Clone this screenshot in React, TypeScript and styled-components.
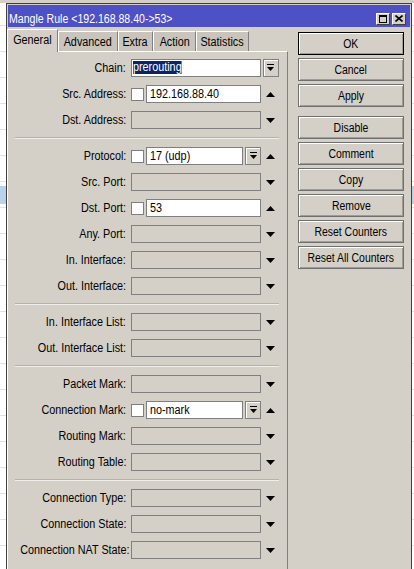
import styled, { createGlobalStyle } from 'styled-components';

type FieldKind = 'chain' | 'text' | 'combo' | 'empty';

interface FieldDef {
  label: string;
  kind: FieldKind;
  value?: string;
}

const sections: FieldDef[][] = [
  [
    { label: 'Chain:', kind: 'chain', value: 'prerouting' },
    { label: 'Src. Address:', kind: 'text', value: '192.168.88.40' },
    { label: 'Dst. Address:', kind: 'empty' },
  ],
  [
    { label: 'Protocol:', kind: 'combo', value: '17 (udp)' },
    { label: 'Src. Port:', kind: 'empty' },
    { label: 'Dst. Port:', kind: 'text', value: '53' },
    { label: 'Any. Port:', kind: 'empty' },
    { label: 'In. Interface:', kind: 'empty' },
    { label: 'Out. Interface:', kind: 'empty' },
  ],
  [
    { label: 'In. Interface List:', kind: 'empty' },
    { label: 'Out. Interface List:', kind: 'empty' },
  ],
  [
    { label: 'Packet Mark:', kind: 'empty' },
    { label: 'Connection Mark:', kind: 'combo', value: 'no-mark' },
    { label: 'Routing Mark:', kind: 'empty' },
    { label: 'Routing Table:', kind: 'empty' },
  ],
  [
    { label: 'Connection Type:', kind: 'empty' },
    { label: 'Connection State:', kind: 'empty' },
    { label: 'Connection NAT State:', kind: 'empty' },
  ],
];

// no narrow face is installed, so tab widths are fixed to the reference
const tabs = [
  { label: 'General', width: 51 },
  { label: 'Advanced', width: 60 },
  { label: 'Extra', width: 35 },
  { label: 'Action', width: 43 },
  { label: 'Statistics', width: 53 },
];

const buttons = [
  { label: 'OK', isDefault: true },
  { label: 'Cancel' },
  { label: 'Apply' },
  { label: 'Disable', spaced: true },
  { label: 'Comment' },
  { label: 'Copy' },
  { label: 'Remove' },
  { label: 'Reset Counters' },
  { label: 'Reset All Counters' },
];

const GlobalStyle = createGlobalStyle`
  html, body {
    margin: 0;
    padding: 0;
  }
  body {
    background: #ffffff;
    font-family: "Liberation Sans Narrow", "Arial Narrow", "Liberation Sans", Arial, sans-serif;
    font-size: 12px;
    color: #000;
  }
`;

// stands in for Arial Narrow: Liberation Sans squeezed horizontally
const Text = styled.span<{ $origin?: 'left' | 'right' | 'center'; $scale?: number }>`
  display: inline-block;
  white-space: nowrap;
  transform: scaleX(${(p) => p.$scale ?? 0.9});
  transform-origin: ${(p) => p.$origin ?? 'left'} center;
`;

const Page = styled.div`
  width: 414px;
  height: 569px;
  overflow: hidden;
  box-sizing: border-box;
  padding: 3px 0 0 6px;
  background:
    linear-gradient(#d4d0c8, #d4d0c8) 0 0 / 100% 3px no-repeat,
    linear-gradient(#b9d1ea, #b9d1ea) 0 186px / 100% 18px no-repeat,
    repeating-linear-gradient(to bottom, #ffffff 0 25px, #e2e2e2 25px 26px);
`;

const Window = styled.div`
  width: 406px;
  height: 600px;
  box-sizing: border-box;
  border: 1px solid #404040;
  padding-top: 1px;
  background: #d4d0c8;
  display: flex;
  flex-direction: column;
`;

const TitleBar = styled.div`
  height: 22px;
  margin: 0 1px;
  box-sizing: border-box;
  padding: 5px 4px 0 1px;
  background: #4e51c6;
  color: #ffffff;
  display: flex;
  align-items: center;
  justify-content: space-between;
`;

const TitleText = styled(Text)`
  line-height: 14px;
`;

const TitleButtons = styled.div`
  display: flex;
  gap: 2px;
`;

const TitleButton = styled.div`
  width: 14px;
  height: 12px;
  box-sizing: border-box;
  background: #d4d0c8;
  border-top: 1px solid #ffffff;
  border-left: 1px solid #ffffff;
  border-right: 1px solid #404040;
  border-bottom: 1px solid #404040;
  display: flex;
  align-items: center;
  justify-content: center;
`;

const Body = styled.div`
  display: flex;
  align-items: flex-start;
  padding-top: 2px;
`;

const TabArea = styled.div`
  width: 281px;
  display: flex;
  flex-direction: column;
`;

const TabStrip = styled.div`
  display: flex;
  align-items: flex-end;
  height: 22px;
`;

const Tab = styled.div<{ $active?: boolean; $width: number }>`
  position: relative;
  z-index: ${(p) => (p.$active ? 2 : 1)};
  width: ${(p) => p.$width}px;
  box-sizing: border-box;
  height: ${(p) => (p.$active ? 23 : 20)}px;
  margin-bottom: ${(p) => (p.$active ? -1 : 0)}px;
  padding-bottom: ${(p) => (p.$active ? 2 : 0)}px;
  display: flex;
  align-items: center;
  justify-content: center;
  background: ${(p) => (p.$active ? '#d4d0c8' : '#c9c5bd')};
  border-top: 1px solid #ffffff;
  border-left: 1px solid #ffffff;
  border-right: 1px solid #808080;
`;

const Panel = styled.div`
  position: relative;
  z-index: 1;
  height: 540px;
  box-sizing: border-box;
  border-top: 1px solid #ffffff;
  border-left: 1px solid #ffffff;
  border-right: 1px solid #808080;
  padding-top: 3px;
`;

const Row = styled.div`
  display: grid;
  grid-template-columns: 123px 131px 17px;
  align-items: center;
  height: 26px;
`;

const Label = styled.div`
  text-align: right;
  padding-right: 5px;
  white-space: nowrap;
`;

const FieldArea = styled.div`
  width: 130px;
  display: flex;
  align-items: center;
  gap: 2px;
`;

const CheckBox = styled.div`
  width: 13px;
  height: 13px;
  flex: none;
  box-sizing: border-box;
  background: #ffffff;
  border: 1px solid #7f7f7f;
`;

const Input = styled.div<{ $empty?: boolean; $tight?: boolean }>`
  flex: 1;
  min-width: 0;
  height: 18px;
  box-sizing: border-box;
  border: 1px solid #7f7f7f;
  background: ${(p) => (p.$empty ? '#d4d0c8' : '#ffffff')};
  padding-left: ${(p) => (p.$tight ? 1 : 3)}px;
  line-height: 16px;
  white-space: nowrap;
  overflow: hidden;
`;

const Selected = styled(Text)`
  background: #0a246a;
  color: #ffffff;
  line-height: 13px;
  vertical-align: middle;
  margin-top: -2px;
`;

const DropButton = styled.div`
  width: 16px;
  height: 18px;
  flex: none;
  box-sizing: border-box;
  background: #d4d0c8;
  border: 1px solid #808080;
  box-shadow: inset 1px 1px #ffffff;
  display: flex;
  align-items: center;
  justify-content: center;
`;

const Trail = styled.div`
  display: flex;
  align-items: center;
  justify-content: center;
  height: 18px;
`;

const Divider = styled.div`
  height: 10px;
  display: flex;
  flex-direction: column;
  justify-content: center;
  padding: 0 8px 0 7px;
`;

const DividerLine = styled.div`
  border-top: 1px solid #b6b2aa;
  border-bottom: 1px solid #f0eee9;
`;

const ButtonColumn = styled.div`
  width: 106px;
  margin: 3px 0 0 10px;
  display: flex;
  flex-direction: column;
  gap: 3px;
`;

const Button = styled.div<{ $default?: boolean; $spaced?: boolean }>`
  height: 23px;
  box-sizing: border-box;
  margin-top: ${(p) => (p.$spaced ? 6 : 0)}px;
  border: 1px solid ${(p) => (p.$default ? '#000000' : '#707070')};
  box-shadow: inset 1px 1px #ffffff, inset -1px -1px #a09c94;
  background: #d4d0c8;
  display: flex;
  align-items: center;
  justify-content: center;
`;

const DropIcon = () => (
  <svg width="7" height="8" viewBox="0 0 7 8">
    <rect x="0" y="0" width="7" height="1" fill="#000" />
    <polygon points="0,3 7,3 3.5,7" fill="#000" />
  </svg>
);

const Arrow = ({ up }: { up?: boolean }) => (
  <svg width="9" height="5" viewBox="0 0 9 5">
    <polygon points={up ? '0,5 9,5 4.5,0' : '0,0 9,0 4.5,5'} fill="#000" />
  </svg>
);

const MaxIcon = () => (
  <svg width="8" height="8" viewBox="0 0 8 8">
    <rect x="0.5" y="0.5" width="7" height="7" fill="none" stroke="#000" />
    <rect x="0" y="0" width="8" height="2" fill="#000" />
  </svg>
);

const CloseIcon = () => (
  <svg width="8" height="7" viewBox="0 0 8 7">
    <path d="M0.5 0.5 L7.5 6.5 M7.5 0.5 L0.5 6.5" stroke="#000" strokeWidth="1.6" />
  </svg>
);

const Field = ({ field }: { field: FieldDef }) => {
  const label = (
    <Label>
      <Text $origin="right">{field.label}</Text>
    </Label>
  );
  switch (field.kind) {
    case 'chain':
      return (
        <Row>
          {label}
          <FieldArea>
            <Input $tight>
              <Selected>{field.value}</Selected>
            </Input>
          </FieldArea>
          <Trail>
            <DropButton>
              <DropIcon />
            </DropButton>
          </Trail>
        </Row>
      );
    case 'text':
      return (
        <Row>
          {label}
          <FieldArea>
            <CheckBox />
            <Input>
              <Text>{field.value}</Text>
            </Input>
          </FieldArea>
          <Trail>
            <Arrow up />
          </Trail>
        </Row>
      );
    case 'combo':
      return (
        <Row>
          {label}
          <FieldArea>
            <CheckBox />
            <Input>
              <Text>{field.value}</Text>
            </Input>
            <DropButton>
              <DropIcon />
            </DropButton>
          </FieldArea>
          <Trail>
            <Arrow up />
          </Trail>
        </Row>
      );
    default:
      return (
        <Row>
          {label}
          <FieldArea>
            <Input $empty />
          </FieldArea>
          <Trail>
            <Arrow />
          </Trail>
        </Row>
      );
  }
};

export default function App() {
  return (
    <Page>
      <GlobalStyle />
      <Window>
        <TitleBar>
          <TitleText $scale={0.88}>Mangle Rule &lt;192.168.88.40-&gt;53&gt;</TitleText>
          <TitleButtons>
            <TitleButton>
              <MaxIcon />
            </TitleButton>
            <TitleButton>
              <CloseIcon />
            </TitleButton>
          </TitleButtons>
        </TitleBar>
        <Body>
          <TabArea>
            <TabStrip>
              {tabs.map((t, i) => (
                <Tab key={t.label} $active={i === 0} $width={t.width}>
                  <Text $origin="center">{t.label}</Text>
                </Tab>
              ))}
            </TabStrip>
            <Panel>
              {sections.map((section, si) => (
                <div key={si}>
                  {si > 0 && (
                    <Divider>
                      <DividerLine />
                    </Divider>
                  )}
                  {section.map((f) => (
                    <Field key={f.label} field={f} />
                  ))}
                </div>
              ))}
            </Panel>
          </TabArea>
          <ButtonColumn>
            {buttons.map((b) => (
              <Button key={b.label} $default={b.isDefault} $spaced={b.spaced}>
                <Text $origin="center" $scale={0.87}>
                  {b.label}
                </Text>
              </Button>
            ))}
          </ButtonColumn>
        </Body>
      </Window>
    </Page>
  );
}
